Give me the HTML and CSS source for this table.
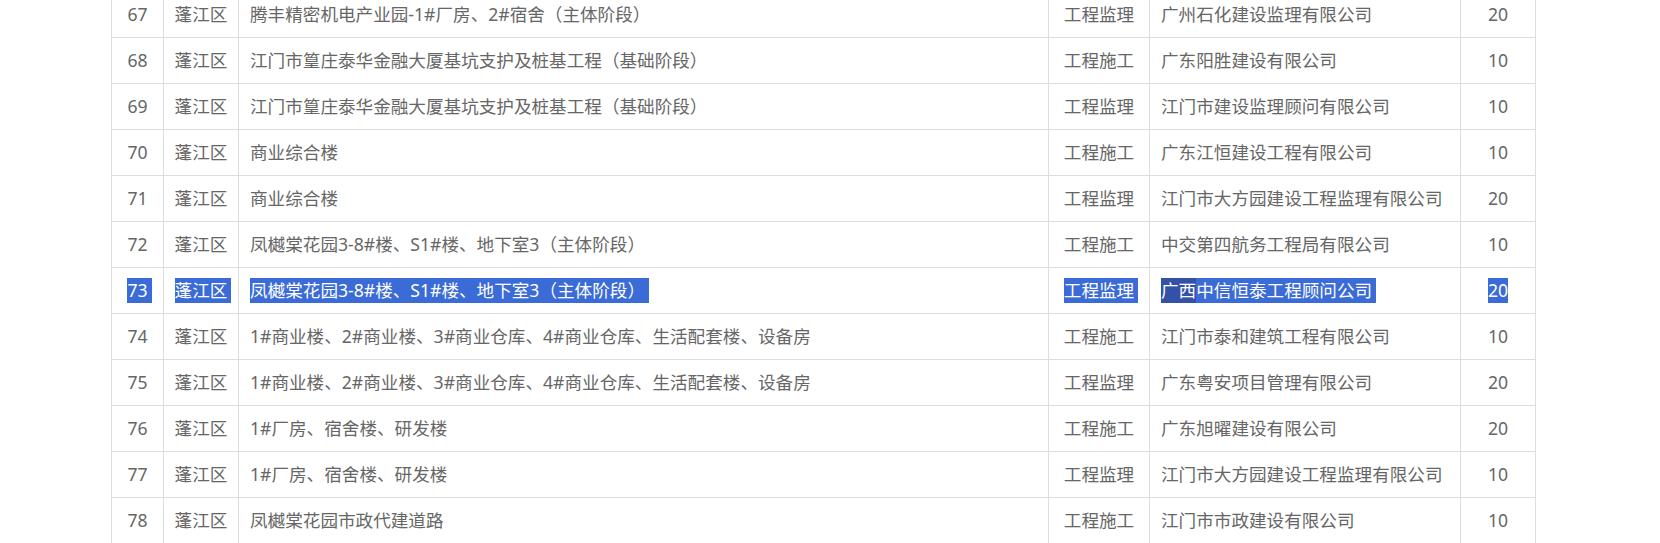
FILE: index.html
```html
<!DOCTYPE html>
<html lang="zh-CN">
<head>
    <meta charset="UTF-8">
    <meta name="viewport" content="width=device-width, initial-scale=1.0">
    <title>项目人员配备情况</title>
    <link rel="stylesheet" href="styles.css">
</head>
<body>
    <table class="project-table">
        <colgroup>
            <col class="col-no">
            <col class="col-area">
            <col class="col-name">
            <col class="col-type">
            <col class="col-company">
            <col class="col-count">
        </colgroup>
        <tbody>
            <tr>
                <td class="center">67</td>
                <td class="center">蓬江区</td>
                <td>腾丰精密机电产业园-1#厂房、2#宿舍（主体阶段）</td>
                <td class="center">工程监理</td>
                <td>广州石化建设监理有限公司</td>
                <td class="center">20</td>
            </tr>
            <tr>
                <td class="center">68</td>
                <td class="center">蓬江区</td>
                <td>江门市篁庄泰华金融大厦基坑支护及桩基工程（基础阶段）</td>
                <td class="center">工程施工</td>
                <td>广东阳胜建设有限公司</td>
                <td class="center">10</td>
            </tr>
            <tr>
                <td class="center">69</td>
                <td class="center">蓬江区</td>
                <td>江门市篁庄泰华金融大厦基坑支护及桩基工程（基础阶段）</td>
                <td class="center">工程监理</td>
                <td>江门市建设监理顾问有限公司</td>
                <td class="center">10</td>
            </tr>
            <tr>
                <td class="center">70</td>
                <td class="center">蓬江区</td>
                <td>商业综合楼</td>
                <td class="center">工程施工</td>
                <td>广东江恒建设工程有限公司</td>
                <td class="center">10</td>
            </tr>
            <tr>
                <td class="center">71</td>
                <td class="center">蓬江区</td>
                <td>商业综合楼</td>
                <td class="center">工程监理</td>
                <td>江门市大方园建设工程监理有限公司</td>
                <td class="center">20</td>
            </tr>
            <tr>
                <td class="center">72</td>
                <td class="center">蓬江区</td>
                <td>凤樾棠花园3-8#楼、S1#楼、地下室3（主体阶段）</td>
                <td class="center">工程施工</td>
                <td>中交第四航务工程局有限公司</td>
                <td class="center">10</td>
            </tr>
            <!-- 选中的一行 -->
            <tr>
                <td class="center"><span class="sel">73</span></td>
                <td class="center"><span class="sel">蓬江区</span></td>
                <td><span class="sel">凤樾棠花园3-8#楼、S1#楼、地下室3（主体阶段）</span></td>
                <td class="center"><span class="sel">工程监理</span></td>
                <td><span class="sel"><span class="sel-dark">广西</span>中信恒泰工程顾问公司</span></td>
                <td class="center"><span class="sel sel-end">20</span></td>
            </tr>
            <tr>
                <td class="center">74</td>
                <td class="center">蓬江区</td>
                <td>1#商业楼、2#商业楼、3#商业仓库、4#商业仓库、生活配套楼、设备房</td>
                <td class="center">工程施工</td>
                <td>江门市泰和建筑工程有限公司</td>
                <td class="center">10</td>
            </tr>
            <tr>
                <td class="center">75</td>
                <td class="center">蓬江区</td>
                <td>1#商业楼、2#商业楼、3#商业仓库、4#商业仓库、生活配套楼、设备房</td>
                <td class="center">工程监理</td>
                <td>广东粤安项目管理有限公司</td>
                <td class="center">20</td>
            </tr>
            <tr>
                <td class="center">76</td>
                <td class="center">蓬江区</td>
                <td>1#厂房、宿舍楼、研发楼</td>
                <td class="center">工程施工</td>
                <td>广东旭曜建设有限公司</td>
                <td class="center">20</td>
            </tr>
            <tr>
                <td class="center">77</td>
                <td class="center">蓬江区</td>
                <td>1#厂房、宿舍楼、研发楼</td>
                <td class="center">工程监理</td>
                <td>江门市大方园建设工程监理有限公司</td>
                <td class="center">10</td>
            </tr>
            <tr>
                <td class="center">78</td>
                <td class="center">蓬江区</td>
                <td>凤樾棠花园市政代建道路</td>
                <td class="center">工程施工</td>
                <td>江门市市政建设有限公司</td>
                <td class="center">10</td>
            </tr>
        </tbody>
    </table>
</body>
</html>
```

FILE: styles.css
```css
/* 页面基础样式 */
html,
body {
    margin: 0;
    padding: 0;
    background: #fff;
    overflow: hidden;
}

body {
    font-family: "Microsoft YaHei", "Noto Sans", "Noto Sans CJK SC", sans-serif;
    font-size: 17.6px;
    color: #666;
}

.project-table {
    width: 1424px;
    margin: -9px 0 0 111px;
    border-collapse: collapse;
    table-layout: fixed;
}

.col-no { width: 52px; }
.col-area { width: 75px; }
.col-name { width: 810px; }
.col-type { width: 101px; }
.col-company { width: 311px; }
.col-count { width: 75px; }

.project-table td {
    height: 25px;
    padding: 10px 10px 10px 11px;
    line-height: 25px;
    border: 1px solid #ddd;
    white-space: nowrap;
    overflow: hidden;
}

.project-table td.center {
    padding: 10px 0;
    text-align: center;
}

/* 选中文字的高亮 */
.sel {
    display: inline-block;
    vertical-align: top;
    padding-right: 4px;
    margin-right: -4px;
    background: #3a6bd6;
    color: #fff;
}

.sel-end {
    padding-right: 0;
    margin-right: 0;
}

.sel-dark {
    display: inline-block;
    vertical-align: top;
    background: #3451a8;
}
```
